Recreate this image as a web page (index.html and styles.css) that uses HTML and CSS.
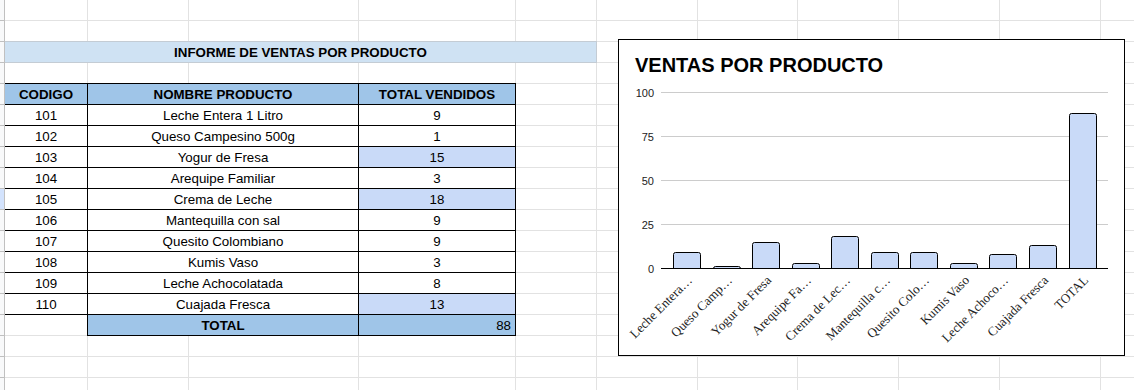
FILE: index.html
```html
<!DOCTYPE html>
<html lang="es">
<head>
<meta charset="utf-8">
<title>Informe de ventas por producto</title>
<link rel="stylesheet" href="styles.css">
</head>
<body>
<div class="sheet">
  <div class="row"><div class="rh"></div></div>
  <div class="row"><div class="rh"></div></div>
  <div class="row"><div class="rh"></div><div class="band">INFORME DE VENTAS POR PRODUCTO</div></div>
  <div class="row"><div class="rh"></div><div class="cap"></div></div>
  <div class="row"><div class="rh"></div><div class="c head">CODIGO</div><div class="c head name">NOMBRE PRODUCTO</div><div class="c head">TOTAL VENDIDOS</div></div>
  <div class="row"><div class="rh"></div><div class="c">101</div><div class="c name">Leche Entera 1 Litro</div><div class="c">9</div></div>
  <div class="row"><div class="rh"></div><div class="c">102</div><div class="c name">Queso Campesino 500g</div><div class="c">1</div></div>
  <div class="row"><div class="rh"></div><div class="c">103</div><div class="c name">Yogur de Fresa</div><div class="c hi">15</div></div>
  <div class="row"><div class="rh"></div><div class="c">104</div><div class="c name">Arequipe Familiar</div><div class="c">3</div></div>
  <div class="row"><div class="rh sel"></div><div class="c">105</div><div class="c name">Crema de Leche</div><div class="c hi">18</div></div>
  <div class="row"><div class="rh"></div><div class="c">106</div><div class="c name">Mantequilla con sal</div><div class="c">9</div></div>
  <div class="row"><div class="rh"></div><div class="c">107</div><div class="c name">Quesito Colombiano</div><div class="c">9</div></div>
  <div class="row"><div class="rh"></div><div class="c">108</div><div class="c name">Kumis Vaso</div><div class="c">3</div></div>
  <div class="row"><div class="rh"></div><div class="c">109</div><div class="c name">Leche Achocolatada</div><div class="c">8</div></div>
  <div class="row"><div class="rh"></div><div class="c">110</div><div class="c name">Cuajada Fresca</div><div class="c hi">13</div></div>
  <div class="row"><div class="rh"></div><div class="c blank"></div><div class="c head name">TOTAL</div><div class="c total-val">88</div></div>
  <div class="row"><div class="rh"></div></div>
  <div class="row"><div class="rh"></div></div>
  <div class="row"><div class="rh"></div></div>

  <div class="chart">
    <div class="chart-title">VENTAS POR PRODUCTO</div>
    <svg class="plot" width="505" height="278" viewBox="0 0 505 278">
      <g class="grid">
        <line x1="42" y1="15.5" x2="489" y2="15.5"/>
        <line x1="42" y1="59.5" x2="489" y2="59.5"/>
        <line x1="42" y1="103.5" x2="489" y2="103.5"/>
        <line x1="42" y1="147.5" x2="489" y2="147.5"/>
      </g>
      <g class="ylab">
        <text x="35" y="19.5">100</text>
        <text x="35" y="63.5">75</text>
        <text x="35" y="107.5">50</text>
        <text x="35" y="151.5">25</text>
        <text x="35" y="195.5">0</text>
      </g>
      <g class="bars">
        <path d="M54.5 191.5V177.5Q54.5 175.5 56.5 175.5H79.5Q81.5 175.5 81.5 177.5V191.5"/>
        <path d="M94.5 191.5V191.5Q94.5 189.5 96.5 189.5H119.5Q121.5 189.5 121.5 191.5V191.5"/>
        <path d="M133.5 191.5V167.5Q133.5 165.5 135.5 165.5H158.5Q160.5 165.5 160.5 167.5V191.5"/>
        <path d="M173.5 191.5V188.5Q173.5 186.5 175.5 186.5H198.5Q200.5 186.5 200.5 188.5V191.5"/>
        <path d="M212.5 191.5V161.5Q212.5 159.5 214.5 159.5H237.5Q239.5 159.5 239.5 161.5V191.5"/>
        <path d="M252.5 191.5V177.5Q252.5 175.5 254.5 175.5H277.5Q279.5 175.5 279.5 177.5V191.5"/>
        <path d="M291.5 191.5V177.5Q291.5 175.5 293.5 175.5H316.5Q318.5 175.5 318.5 177.5V191.5"/>
        <path d="M331.5 191.5V188.5Q331.5 186.5 333.5 186.5H356.5Q358.5 186.5 358.5 188.5V191.5"/>
        <path d="M370.5 191.5V179.5Q370.5 177.5 372.5 177.5H395.5Q397.5 177.5 397.5 179.5V191.5"/>
        <path d="M410.5 191.5V170.5Q410.5 168.5 412.5 168.5H435.5Q437.5 168.5 437.5 170.5V191.5"/>
        <path d="M450.5 191.5V38.5Q450.5 36.5 452.5 36.5H475.5Q477.5 36.5 477.5 38.5V191.5"/>
      </g>
      <line class="axis" x1="42" y1="191.5" x2="489" y2="191.5"/>
      <g class="xlab">
        <text x="74" y="204" transform="rotate(-45 74 204)">Leche Entera…</text>
        <text x="114" y="204" transform="rotate(-45 114 204)">Queso Camp…</text>
        <text x="153" y="204" transform="rotate(-45 153 204)">Yogur de Fresa</text>
        <text x="193" y="204" transform="rotate(-45 193 204)">Arequipe Fa…</text>
        <text x="232" y="204" transform="rotate(-45 232 204)">Crema de Lec…</text>
        <text x="272" y="204" transform="rotate(-45 272 204)">Mantequilla c…</text>
        <text x="311" y="204" transform="rotate(-45 311 204)">Quesito Colo…</text>
        <text x="351" y="204" transform="rotate(-45 351 204)">Kumis Vaso</text>
        <text x="390" y="204" transform="rotate(-45 390 204)">Leche Achoco…</text>
        <text x="430" y="204" transform="rotate(-45 430 204)">Cuajada Fresca</text>
        <text x="470" y="204" transform="rotate(-45 470 204)">TOTAL</text>
      </g>
    </svg>
  </div>
</div>
</body>
</html>
```
FILE: styles.css
```css
html, body {
  margin: 0;
  padding: 0;
  background: #fff;
}

.sheet {
  position: relative;
  width: 1134px;
  height: 390px;
  overflow: hidden;
  font-family: "Liberation Sans", Arial, sans-serif;
  font-size: 10pt;
  color: #000;
  background-color: #fff;
  background-image:
    linear-gradient(#e2e2e2, #e2e2e2),
    linear-gradient(#e2e2e2, #e2e2e2),
    linear-gradient(#e2e2e2, #e2e2e2),
    linear-gradient(#e2e2e2, #e2e2e2),
    linear-gradient(#e2e2e2, #e2e2e2),
    linear-gradient(#e2e2e2, #e2e2e2),
    linear-gradient(#e2e2e2, #e2e2e2),
    linear-gradient(#e2e2e2, #e2e2e2),
    linear-gradient(#e2e2e2, #e2e2e2),
    linear-gradient(#e2e2e2, #e2e2e2),
    repeating-linear-gradient(to bottom, transparent 0 20px, #e2e2e2 20px 21px);
  background-position:
    87px 0, 188px 0, 358px 0, 515px 0, 596px 0,
    697px 0, 797px 0, 898px 0, 999px 0, 1100px 0,
    0 0;
  background-size:
    1px 100%, 1px 100%, 1px 100%, 1px 100%, 1px 100%,
    1px 100%, 1px 100%, 1px 100%, 1px 100%, 1px 100%,
    100% 100%;
  background-repeat: no-repeat;
}

.row {
  display: grid;
  grid-template-columns: 5px 83px 101px 170px 157px 81px;
  height: 21px;
}

.rh {
  box-sizing: border-box;
  background: #f8f9fa;
  border-right: 1px solid #c0c0c0;
  border-bottom: 1px solid #c0c0c0;
}

.rh.sel {
  background: #d3e3fd;
}

.band {
  grid-column: span 5;
  box-sizing: border-box;
  margin-top: -1px;
  background: #cfe2f3;
  border-top: 1px solid #c4ccd4;
  border-bottom: 1px solid #c4ccd4;
  border-right: 1px solid #c4ccd4;
  display: flex;
  align-items: center;
  justify-content: center;
  font-weight: bold;
}

.cap {
  grid-column: span 4;
  box-sizing: border-box;
  border-bottom: 1px solid #000;
}

.c {
  box-sizing: border-box;
  background: #fff;
  border-right: 1px solid #000;
  border-bottom: 1px solid #000;
  display: flex;
  align-items: center;
  justify-content: center;
  white-space: nowrap;
}

.c.name {
  grid-column: span 2;
}

.c.head {
  background: #9fc5e8;
  font-weight: bold;
}

.c.hi {
  background: #c9daf8;
}

.c.blank {
  background: transparent;
  border-bottom: none;
}

.c.total-val {
  background: #9fc5e8;
  justify-content: flex-end;
  padding-right: 4px;
}

.chart {
  position: absolute;
  left: 618px;
  top: 39px;
  width: 507px;
  height: 317px;
  box-sizing: border-box;
  border: 1px solid #000;
  background: #fff;
}

.chart-title {
  padding: 13px 0 0 16px;
  font: bold 20px/24px "Liberation Sans", Arial, sans-serif;
  color: #000;
}

.plot {
  display: block;
}

.grid line {
  stroke: #cccccc;
  stroke-width: 1;
}

.axis {
  stroke: #000;
  stroke-width: 1;
}

.ylab text {
  font-family: "Liberation Sans", Arial, sans-serif;
  font-size: 11px;
  fill: #222;
  text-anchor: end;
}

.bars path {
  fill: #c9daf8;
  stroke: #000;
  stroke-width: 1;
}

.xlab text {
  font-family: "Liberation Serif", "Times New Roman", serif;
  font-size: 13px;
  fill: #222;
  text-anchor: end;
}
```
